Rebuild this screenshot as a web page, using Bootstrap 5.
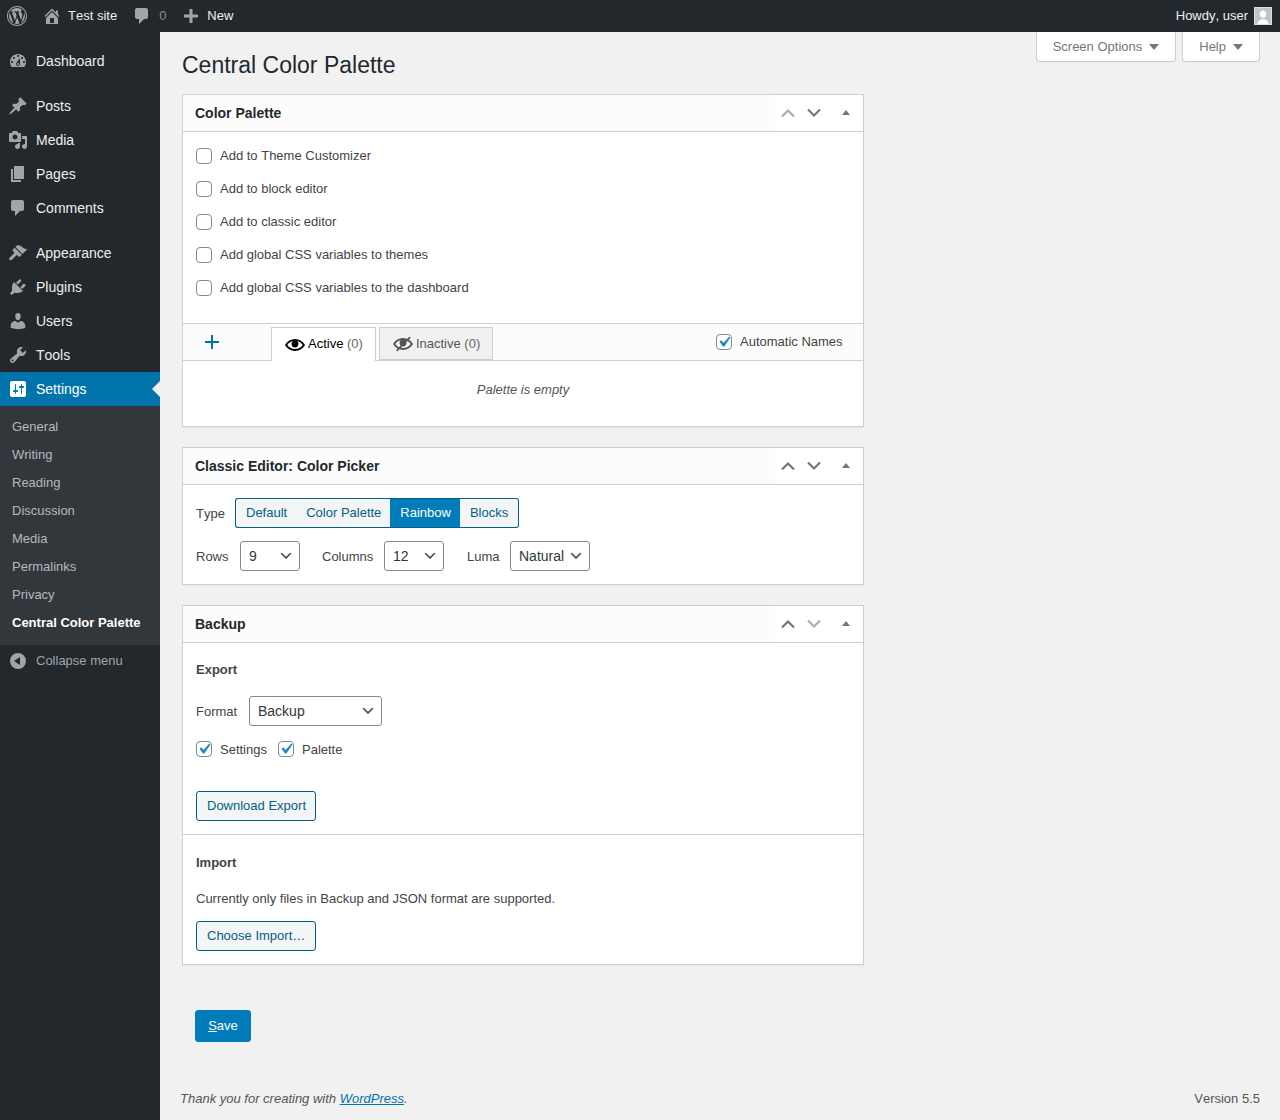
<!DOCTYPE html>
<html lang="en">
<head>
<meta charset="utf-8">
<title>Central Color Palette</title>
<link href="https://cdn.jsdelivr.net/npm/bootstrap@5.3.0/dist/css/bootstrap.min.css" rel="stylesheet">
<style>
html,body{height:1120px;overflow:hidden}
body{font-family:"Liberation Sans",Arial,sans-serif;font-size:13px;line-height:1.4;color:#444;background:#f1f1f1;font-kerning:none}
.btn,.form-select{font-family:"Liberation Sans",Arial,sans-serif;font-kerning:none}
svg{display:block;fill:currentColor}
a{text-decoration:none}
.wp-top{height:32px;background:#23282d;color:#eee;padding:0 7px;}
.wp-top .tl{display:flex;align-items:center;height:32px;white-space:nowrap}
.wp-top .ic{color:#a0a5aa}
.wp-top .cnt{color:#a0a5aa;opacity:.8}
.ava{width:18px;height:18px;background:#c4c4c4;border:1px solid #ddd;color:#fff;overflow:hidden}
.wp-shell{height:1088px}
.wp-side{width:160px;flex:none;background:#23282d;padding-top:12px}
.mi{display:flex;align-items:center;height:34px;font-size:14px;color:#eee;padding:2px 0 0 8px;position:relative}
.mi svg{color:#a0a5aa;width:20px;height:20px;flex:none;margin:-2px 8px 0 0}
.mi-gap{height:11px}
.mi.cur{background:#0073aa;color:#fff}
.mi.cur svg{color:#fff}
.mi.cur::after{content:"";position:absolute;right:0;top:9px;border:8px solid transparent;border-right-color:#f1f1f1;border-left:0}
.subm{background:#32373c;padding:6px 0 9px}
.subm a{display:block;height:28px;line-height:30px;padding-left:12px;color:#b4b9be;font-size:13px}
.subm a.on{color:#fff;font-weight:700}
.coll{display:flex;align-items:center;height:32px;padding-left:8px;color:#a0a5aa;font-size:13px}
.coll svg{width:20px;height:20px;margin-right:8px}
.wp-main{flex:1;min-width:0;padding-left:20px;padding-right:20px}
.head-row{padding-left:2px;height:62px}
.page-h{font-size:23px;font-weight:400;color:#23282d;margin:0;padding-top:18px;line-height:30px}
.tab-meta{height:30px;background:#fff;border:1px solid #ccd0d4;border-top:0;border-radius:0 0 4px 4px;color:#72777c;font-size:13px;padding:2px 16px 0;display:flex;align-items:center;gap:7px;box-shadow:0 1px 1px rgba(0,0,0,.04)}
.tri{width:0;height:0;border:5px solid transparent;border-top:6px solid #72777c;border-bottom:0;margin-top:-2px}
.pbox{width:682px;margin-left:2px;background:#fff;border:1px solid #ccd0d4;box-shadow:0 1px 1px rgba(0,0,0,.04);margin-bottom:20px;border-radius:0}
.pbox-h{height:37px;background:#fcfcfc;border-bottom:1px solid #ccd0d4;padding-left:12px}
.pbox-h h2{font-size:14px;font-weight:700;color:#23282d;margin:0;line-height:37px}
.hbtns{background:#fff;width:88px;height:36px;position:relative;gap:0}
.hb{width:26px;display:flex;justify-content:center;color:#72777c}
.hb.dim{color:#a0a5aa;opacity:.9}
.hb svg{width:16px;height:10px;fill:none;stroke:currentColor;stroke-width:2.2}
.uptri{width:0;height:0;border:4px solid transparent;border-bottom:5px solid #72777c;border-top:0;margin:-2px 13px 0 auto}
.form-check-input.wpc{width:16px;height:16px;margin:0;border:1px solid #7e8993;border-radius:4px;background-color:#fff;flex:none;float:none}
.form-check-input.wpc:checked{background-color:#fff;border-color:#7e8993;background-size:21px 21px;background-position:center;background-image:url("data:image/svg+xml,%3Csvg xmlns='http://www.w3.org/2000/svg' viewBox='0 0 20 20'%3E%3Cpath fill='%231e8cbe' d='M14.83 4.89l1.34.94-5.81 8.38H9.02L5.78 9.67l1.34-1.25 2.57 2.4z'/%3E%3C/svg%3E")}
.chk-line{height:33px;display:flex;align-items:center;gap:8px;color:#444;padding-top:2px}
.chk-line .form-check-input.wpc{margin-top:-2px}
.chk-list{padding:7px 13px 19px;height:191px}
.pal-bar{height:38px;background:#fcfcfc;border-top:1px solid #ccd0d4;border-bottom:1px solid #ccd0d4;position:relative;padding-left:88px}
.add-ic{position:absolute;left:20px;top:9px;width:18px;height:18px;color:#0073aa}
.tabx{height:33px;margin-top:3px;border:1px solid #ccd0d4;display:flex;align-items:center;gap:3px;padding:0 12px 0 13px;background:#f1f1f1;color:#555}
.tabx svg{width:20px;height:20px;flex:none}
.tabx.act{background:#fff;height:34px;border-bottom:0;color:#000;margin-right:3px;position:relative;z-index:1}
.tabx .gr{color:#666}
.auto-n{position:absolute;left:533px;top:0;height:36px;display:flex;align-items:center;gap:8px}
.empty-m{height:65px;text-align:center;font-style:italic;color:#555;line-height:58px}
.pad-2{padding:13px 13px 13px}
.lbl-row{display:flex;align-items:center}
.lbl-row>span{padding-top:2px}
.seg .btn{height:30px;font-size:13px;line-height:28px;padding:0 10px;background:#f3f5f6;color:#016087;border:1px solid #016087;border-radius:3px;white-space:nowrap}
.seg .btn:not(:first-child){margin-left:0;border-left:0}
.seg .btn:not(:last-child){border-right:0}
.seg .btn.on{background:#007cba;color:#fff;border-color:#016087}
.form-select.wps{height:30px;font-size:14px;line-height:28px;padding:0 24px 0 8px;border:1px solid #7e8993;border-radius:3px;color:#32373c;background-position:right 5px center;background-size:16px 16px;background-image:url("data:image/svg+xml,%3Csvg xmlns='http://www.w3.org/2000/svg' viewBox='0 0 20 20'%3E%3Cpath fill='%23555' d='M5 6l5 5 5-5 2 1-7 7-7-7z'/%3E%3C/svg%3E")}
.btn.wpb{height:30px;font-size:13px;line-height:28px;padding:0 10px;background:#f3f5f6;color:#016087;border:1px solid #016087;border-radius:3px;white-space:nowrap}
.btn.savebtn{height:32px;width:56px;padding:0;line-height:30px;font-size:13px;background:#007cba;color:#fff;border:1px solid #007cba;border-radius:3px;margin-left:15px;margin-top:29px}
.sec-t{font-size:13px;font-weight:700;color:#444;margin:0;line-height:18px}
.wp-foot{padding-top:48px;color:#555}
.wp-foot a{color:#0073aa;text-decoration:underline}
</style>
</head>
<body>
<div class="wp-top d-flex justify-content-between">
  <div class="d-flex align-items-center">
    <div class="tl ic"><svg width="20" height="20" viewBox="0 0 20 20"><path d="M20 10c0-5.52-4.48-10-10-10S0 4.48 0 10s4.48 10 10 10 10-4.48 10-10zM10 1.01c4.97 0 8.99 4.02 8.99 8.99s-4.02 8.99-8.99 8.99S1.01 14.97 1.01 10 5.03 1.01 10 1.01zM8.01 14.82L4.96 6.61c.49-.03 1.05-.08 1.05-.08.43-.05.38-1.01-.06-.99 0 0-1.29.1-2.13.1-.15 0-.33 0-.52-.01 1.44-2.17 3.9-3.6 6.7-3.6 2.09 0 3.99.79 5.41 2.09-.6-.1-1.45.35-1.45 1.42 0 .66.38 1.22.79 1.88.31.54.5 1.22.5 2.21 0 1.34-1.27 4.48-1.27 4.48l-2.71-7.5c.48-.03.75-.16.75-.16.43-.05.38-1.1-.05-1.08 0 0-1.3.11-2.14.11-.78 0-2.11-.11-2.11-.11-.43-.02-.48 1.06-.05 1.08l.84.08 1.12 3.04zm6.02 2.15L16.64 10s.67-1.69.39-3.81c.63 1.14.94 2.42.94 3.81 0 2.96-1.56 5.58-3.94 6.97zM2.68 6.77L6.5 17.25c-2.67-1.3-4.47-4.08-4.47-7.25 0-1.16.2-2.23.65-3.23zm7.45 4.53l2.29 6.25c-.75.27-1.57.42-2.42.42-.72 0-1.41-.11-2.06-.3z"/></svg></div>
    <div class="tl" style="margin-left:15px"><span class="ic"><svg width="20" height="20" viewBox="0 0 20 20"><path d="M16 8.5l1.53 1.53-1.06 1.06L10 4.62l-6.47 6.47-1.06-1.06L10 2.5l4 4v-2h2v4zm-6-2.46l6 5.99V18H4v-5.97zM12 17v-5H8v5h4z"/></svg></span><span style="margin-left:6px">Test site</span></div>
    <div class="tl" style="margin-left:15px"><span class="ic"><svg width="20" height="20" viewBox="0 0 20 20"><path d="M5 2h9c1.1 0 2 .9 2 2v7c0 1.1-.9 2-2 2h-2l-5 5v-5H5c-1.1 0-2-.9-2-2V4c0-1.1.9-2 2-2z"/></svg></span><span class="cnt" style="margin-left:7px">0</span></div>
    <div class="tl" style="margin-left:15px"><span class="ic"><svg width="20" height="20" viewBox="0 0 20 20"><path d="M17 8.5v3h-5.5V17h-3v-5.500H3v-3h5.500V3h3v5.500z"/></svg></span><span style="margin-left:6px">New</span></div>
  </div>
  <div class="d-flex align-items-center" style="padding-right:1px">
    <span>Howdy, user</span>
    <span class="ava" style="margin-left:6px"><svg width="16" height="16" viewBox="0 0 16 16"><path d="M8 2.5c2 0 3.2 1.5 3.2 3.6S10 10 8 10 4.800 8.200 4.800 6.100 6 2.500 8 2.500zM2.500 16c.2-3 2-4.800 5.500-4.800s5.300 1.800 5.500 4.800z"/></svg></span>
  </div>
</div>
<div class="wp-shell d-flex">
  <nav class="wp-side">
    <div class="mi"><svg viewBox="0 0 20 20"><path d="M3.76 16h12.48c1.1-1.37 1.76-3.11 1.76-5 0-4.42-3.58-8-8-8s-8 3.58-8 8c0 1.89.66 3.63 1.76 5zM10 4c.55 0 1 .45 1 1s-.45 1-1 1-1-.45-1-1 .45-1 1-1zM6 6c.55 0 1 .45 1 1s-.45 1-1 1-1-.45-1-1 .45-1 1-1zm8 0c.55 0 1 .45 1 1s-.45 1-1 1-1-.45-1-1 .45-1 1-1zm-5.370 5.550L12 7v6c0 1.100-.9 2-2 2s-2-.9-2-2c0-.57.24-1.080.63-1.450zM4 10c.55 0 1 .45 1 1s-.45 1-1 1-1-.45-1-1 .45-1 1-1zm12 0c.55 0 1 .45 1 1s-.45 1-1 1-1-.45-1-1 .45-1 1-1zm-5 3c0-.55-.45-1-1-1s-1 .45-1 1 .45 1 1 1 1-.45 1-1z"/></svg>Dashboard</div>
    <div class="mi-gap"></div>
    <div class="mi"><svg viewBox="0 0 20 20"><path d="M10.440 3.020l1.820-1.820 6.360 6.350-1.830 1.820c-1.050-.68-2.480-.57-3.410.36l-.75.75c-.92.93-1.040 2.350-.35 3.410l-1.830 1.820-2.410-2.410-2.800 2.790c-.42.42-3.380 2.710-3.800 2.290s1.860-3.390 2.280-3.810l2.790-2.790L4.100 9.360l1.830-1.820c1.050.69 2.480.57 3.400-.36l.75-.75c.93-.92 1.050-2.350.36-3.410z"/></svg>Posts</div>
    <div class="mi"><svg viewBox="0 0 20 20"><path d="M13 11V4c0-.55-.45-1-1-1h-1.670L9 1H5L3.670 3H2c-.55 0-1 .45-1 1v7c0 .55.45 1 1 1h10c.55 0 1-.45 1-1zM7 4.500c1.380 0 2.500 1.120 2.500 2.500S8.380 9.500 7 9.500 4.500 8.380 4.500 7 5.620 4.500 7 4.500zM14 6h5v10.500c0 1.380-1.120 2.500-2.500 2.500S14 17.880 14 16.500s1.120-2.500 2.500-2.500c.17 0 .34.02.5.05V9h-3V6zm-4 8.050V13h2v3.500c0 1.380-1.120 2.500-2.500 2.500S7 17.880 7 16.500 8.120 14 9.500 14c.17 0 .34.02.5.05z"/></svg>Media</div>
    <div class="mi"><svg viewBox="0 0 20 20"><path d="M6 15V2h10v13H6zm-1 1h8v2H3V5h2v11z"/></svg>Pages</div>
    <div class="mi"><svg viewBox="0 0 20 20"><path d="M5 2h9c1.100 0 2 .9 2 2v7c0 1.100-.9 2-2 2h-2l-5 5v-5H5c-1.100 0-2-.9-2-2V4c0-1.100.9-2 2-2z"/></svg>Comments</div>
    <div class="mi-gap"></div>
    <div class="mi"><svg viewBox="0 0 20 20"><path d="M14.480 11.060L7.410 3.990l1.500-1.500c.5-.56 2.300-.47 3.510.32 1.210.8 1.430 1.280 2.910 2.100 1.180.64 2.450 1.260 4.450.85zm-.71.71L6.700 4.700 4.930 6.470c-.39.39-.39 1.020 0 1.410l1.060 1.060c.39.39.39 1.030 0 1.420l-3.700 3.700c-.8.8-1.200 1.500-1.100 2.100.1.500.6 1 1.200 1.100.6.100 1.300-.3 2.100-1.100l3.700-3.700c.39-.39 1.020-.39 1.410 0l1.060 1.060c.39.39 1.020.39 1.410 0z"/></svg>Appearance</div>
    <div class="mi"><svg viewBox="0 0 20 20"><path d="M13.110 4.360L9.870 7.600 8 5.730l3.240-3.240c.35-.34 1.050-.2 1.560.32.52.51.66 1.210.31 1.550zm-8 1.770l.91-1.120 9.010 9.010-1.190.84c-.71.71-2.630 1.160-3.820 1.160H6.140L4.900 17.260c-.59.59-1.540.59-2.120 0-.59-.58-.59-1.530 0-2.120l1.240-1.240v-3.880c0-1.130.4-3.190 1.090-3.890zm7.260 3.970l3.240-3.240c.34-.35 1.040-.21 1.550.31.52.51.66 1.210.31 1.550l-3.240 3.250z"/></svg>Plugins</div>
    <div class="mi"><svg viewBox="0 0 20 20"><path d="M10 9.250c-2.270 0-2.730-3.440-2.730-3.440C7 4.020 7.820 2 9.970 2c2.160 0 2.980 2.020 2.710 3.810 0 0-.41 3.440-2.680 3.440zm0 2.570L12.720 10c2.390 0 4.520 2.330 4.520 4.530v2.490s-3.650 1.130-7.240 1.130c-3.650 0-7.240-1.130-7.240-1.130v-2.490c0-2.250 1.940-4.480 4.470-4.480z"/></svg>Users</div>
    <div class="mi"><svg viewBox="0 0 20 20"><path d="M16.680 9.770c-1.340 1.340-3.300 1.670-4.950.99l-5.410 6.520c-.99.99-2.590.99-3.580 0s-.99-2.590 0-3.570l6.520-5.420c-.68-1.650-.35-3.610.99-4.950 1.280-1.280 3.120-1.620 4.720-1.060l-2.890 2.890 2.820 2.820 2.860-2.870c.53 1.580.18 3.390-1.080 4.650zM3.810 16.210c.4.39 1.040.39 1.430 0 .4-.4.4-1.040 0-1.430-.39-.4-1.030-.4-1.430 0-.39.39-.39 1.030 0 1.430z"/></svg>Tools</div>
    <div class="mi cur"><svg viewBox="0 0 20 20"><path d="M18 16V4c0-1.100-.9-2-2-2H4c-1.100 0-2 .9-2 2v12c0 1.100.9 2 2 2h12c1.100 0 2-.9 2-2zM8 11h1c.55 0 1 .45 1 1s-.45 1-1 1H8v1.500c0 .28-.22.5-.5.5s-.5-.22-.5-.5V13H6c-.55 0-1-.45-1-1s.45-1 1-1h1V5.500c0-.28.22-.5.5-.5s.5.22.5.5V11zm5-2h-1c-.55 0-1-.45-1-1s.45-1 1-1h1V5.500c0-.28.22-.5.5-.5s.5.22.5.5V7h1c.55 0 1 .45 1 1s-.45 1-1 1h-1v5.500c0 .28-.22.5-.5.5s-.5-.22-.5-.5V9z"/></svg>Settings</div>
    <div class="subm">
      <a href="#">General</a><a href="#">Writing</a><a href="#">Reading</a><a href="#">Discussion</a><a href="#">Media</a><a href="#">Permalinks</a><a href="#">Privacy</a><a href="#" class="on">Central Color Palette</a>
    </div>
    <div class="coll"><svg viewBox="0 0 20 20"><path fill-rule="evenodd" d="M10 2a8 8 0 100 16 8 8 0 000-16zM12 6v8l-6-4z"/></svg>Collapse menu</div>
  </nav>
  <main class="wp-main d-flex flex-column">
    <div class="head-row d-flex justify-content-between align-items-start">
      <h1 class="page-h">Central Color Palette</h1>
      <div class="d-flex" style="gap:6px">
        <div class="tab-meta">Screen Options <span class="tri"></span></div>
        <div class="tab-meta">Help <span class="tri"></span></div>
      </div>
    </div>

    <section class="pbox">
      <div class="pbox-h d-flex justify-content-between align-items-start">
        <h2>Color Palette</h2>
        <div class="hbtns d-flex align-items-center">
          <div class="hb dim"><svg viewBox="0 0 16 10"><path d="M2 8.500l6-6 6 6"/></svg></div>
          <div class="hb"><svg viewBox="0 0 16 10"><path d="M2 1.500l6 6 6-6"/></svg></div>
          <div class="uptri"></div>
        </div>
      </div>
      <div class="chk-list">
        <label class="chk-line"><input type="checkbox" class="form-check-input wpc">Add to Theme Customizer</label>
        <label class="chk-line"><input type="checkbox" class="form-check-input wpc">Add to block editor</label>
        <label class="chk-line"><input type="checkbox" class="form-check-input wpc">Add to classic editor</label>
        <label class="chk-line"><input type="checkbox" class="form-check-input wpc">Add global CSS variables to themes</label>
        <label class="chk-line"><input type="checkbox" class="form-check-input wpc">Add global CSS variables to the dashboard</label>
      </div>
      <div class="pal-bar d-flex align-items-start">
        <svg class="add-ic" viewBox="0 0 18 18"><path d="M8 2h2v6h6v2h-6v6H8v-6H2V8h6z"/></svg>
        <div class="tabx act"><svg viewBox="0 0 20 20"><path d="M19.700 9.400C17.700 6 14 3.900 10 3.900S2.300 6 .3 9.400L0 10l.3.6c2 3.400 5.700 5.500 9.700 5.500s7.700-2.100 9.700-5.500l.3-.6-.3-.6zM10 14.100c-3.100 0-6-1.600-7.700-4.100C3.600 8 5.700 6.600 8 6.100c-.9.6-1.500 1.700-1.500 2.900 0 1.900 1.600 3.500 3.500 3.500s3.500-1.600 3.500-3.500c0-1.200-.6-2.300-1.500-2.900 2.300.5 4.400 1.900 5.700 3.900-1.700 2.500-4.600 4.100-7.700 4.100z"/></svg><span>Active <span class="gr">(0)</span></span></div>
        <div class="tabx"><svg viewBox="0 0 20 20"><path d="M19.700 9.400C17.700 6 14 3.900 10 3.900S2.300 6 .3 9.400L0 10l.3.6c2 3.400 5.700 5.500 9.700 5.500s7.700-2.100 9.700-5.500l.3-.6-.3-.6zM10 14.100c-3.100 0-6-1.600-7.700-4.100C3.600 8 5.700 6.600 8 6.100c-.9.6-1.500 1.700-1.500 2.900 0 1.900 1.600 3.500 3.500 3.500s3.500-1.600 3.500-3.500c0-1.200-.6-2.300-1.500-2.900 2.300.5 4.400 1.900 5.700 3.900-1.700 2.500-4.600 4.100-7.700 4.100z"/><path d="M16.500 2.500l1.200 1.200L4.200 17.500 3 16.300z"/></svg><span style="padding-top:1px">Inactive <span class="gr">(0)</span></span></div>
        <label class="auto-n"><input type="checkbox" class="form-check-input wpc" checked>Automatic Names</label>
      </div>
      <div class="empty-m">Palette is empty</div>
    </section>

    <section class="pbox">
      <div class="pbox-h d-flex justify-content-between align-items-start">
        <h2>Classic Editor: Color Picker</h2>
        <div class="hbtns d-flex align-items-center">
          <div class="hb"><svg viewBox="0 0 16 10"><path d="M2 8.500l6-6 6 6"/></svg></div>
          <div class="hb"><svg viewBox="0 0 16 10"><path d="M2 1.500l6 6 6-6"/></svg></div>
          <div class="uptri"></div>
        </div>
      </div>
      <div class="pad-2">
        <div class="lbl-row" style="margin-bottom:13px">
          <span style="width:39px">Type</span>
          <div class="btn-group seg" role="group">
            <button type="button" class="btn">Default</button>
            <button type="button" class="btn">Color Palette</button>
            <button type="button" class="btn on">Rainbow</button>
            <button type="button" class="btn">Blocks</button>
          </div>
        </div>
        <div class="lbl-row">
          <span style="width:44px">Rows</span>
          <select class="form-select wps" style="width:60px"><option>9</option></select>
          <span style="margin-left:22px;width:62px">Columns</span>
          <select class="form-select wps" style="width:60px"><option>12</option></select>
          <span style="margin-left:23px;width:43px">Luma</span>
          <select class="form-select wps" style="width:80px"><option>Natural</option></select>
        </div>
      </div>
    </section>

    <section class="pbox" style="margin-bottom:0">
      <div class="pbox-h d-flex justify-content-between align-items-start">
        <h2>Backup</h2>
        <div class="hbtns d-flex align-items-center">
          <div class="hb"><svg viewBox="0 0 16 10"><path d="M2 8.500l6-6 6 6"/></svg></div>
          <div class="hb dim"><svg viewBox="0 0 16 10"><path d="M2 1.500l6 6 6-6"/></svg></div>
          <div class="uptri"></div>
        </div>
      </div>
      <div style="padding:18px 13px 13px">
        <p class="sec-t" style="margin-bottom:17px">Export</p>
        <div class="lbl-row" style="margin-bottom:7px">
          <span style="width:53px">Format</span>
          <select class="form-select wps" style="width:133px"><option>Backup</option></select>
        </div>
        <div class="d-flex align-items-center" style="height:32px;gap:11px">
          <label class="d-flex align-items-center" style="gap:8px;padding-top:2px"><input type="checkbox" class="form-check-input wpc" style="margin-top:-2px" checked>Settings</label>
          <label class="d-flex align-items-center" style="gap:8px;padding-top:2px"><input type="checkbox" class="form-check-input wpc" style="margin-top:-2px" checked>Palette</label>
        </div>
        <button type="button" class="btn wpb" style="margin-top:26px;width:120px">Download Export</button>
      </div>
      <div style="border-top:1px solid #ccd0d4;padding:19px 13px 13px">
        <p class="sec-t" style="margin-bottom:18px">Import</p>
        <p style="margin:0 0 13px;line-height:18px">Currently only files in Backup and JSON format are supported.</p>
        <button type="button" class="btn wpb" style="width:120px">Choose Import…</button>
      </div>
    </section>

    <div class="mt-3"><button type="button" class="btn savebtn"><u>S</u>ave</button></div>

    <footer class="wp-foot d-flex justify-content-between">
      <span><em>Thank you for creating with <a href="#">WordPress</a>.</em></span>
      <span>Version 5.5</span>
    </footer>
  </main>
</div>
<script src="https://cdn.jsdelivr.net/npm/bootstrap@5.3.0/dist/js/bootstrap.bundle.min.js"></script>
</body>
</html>
